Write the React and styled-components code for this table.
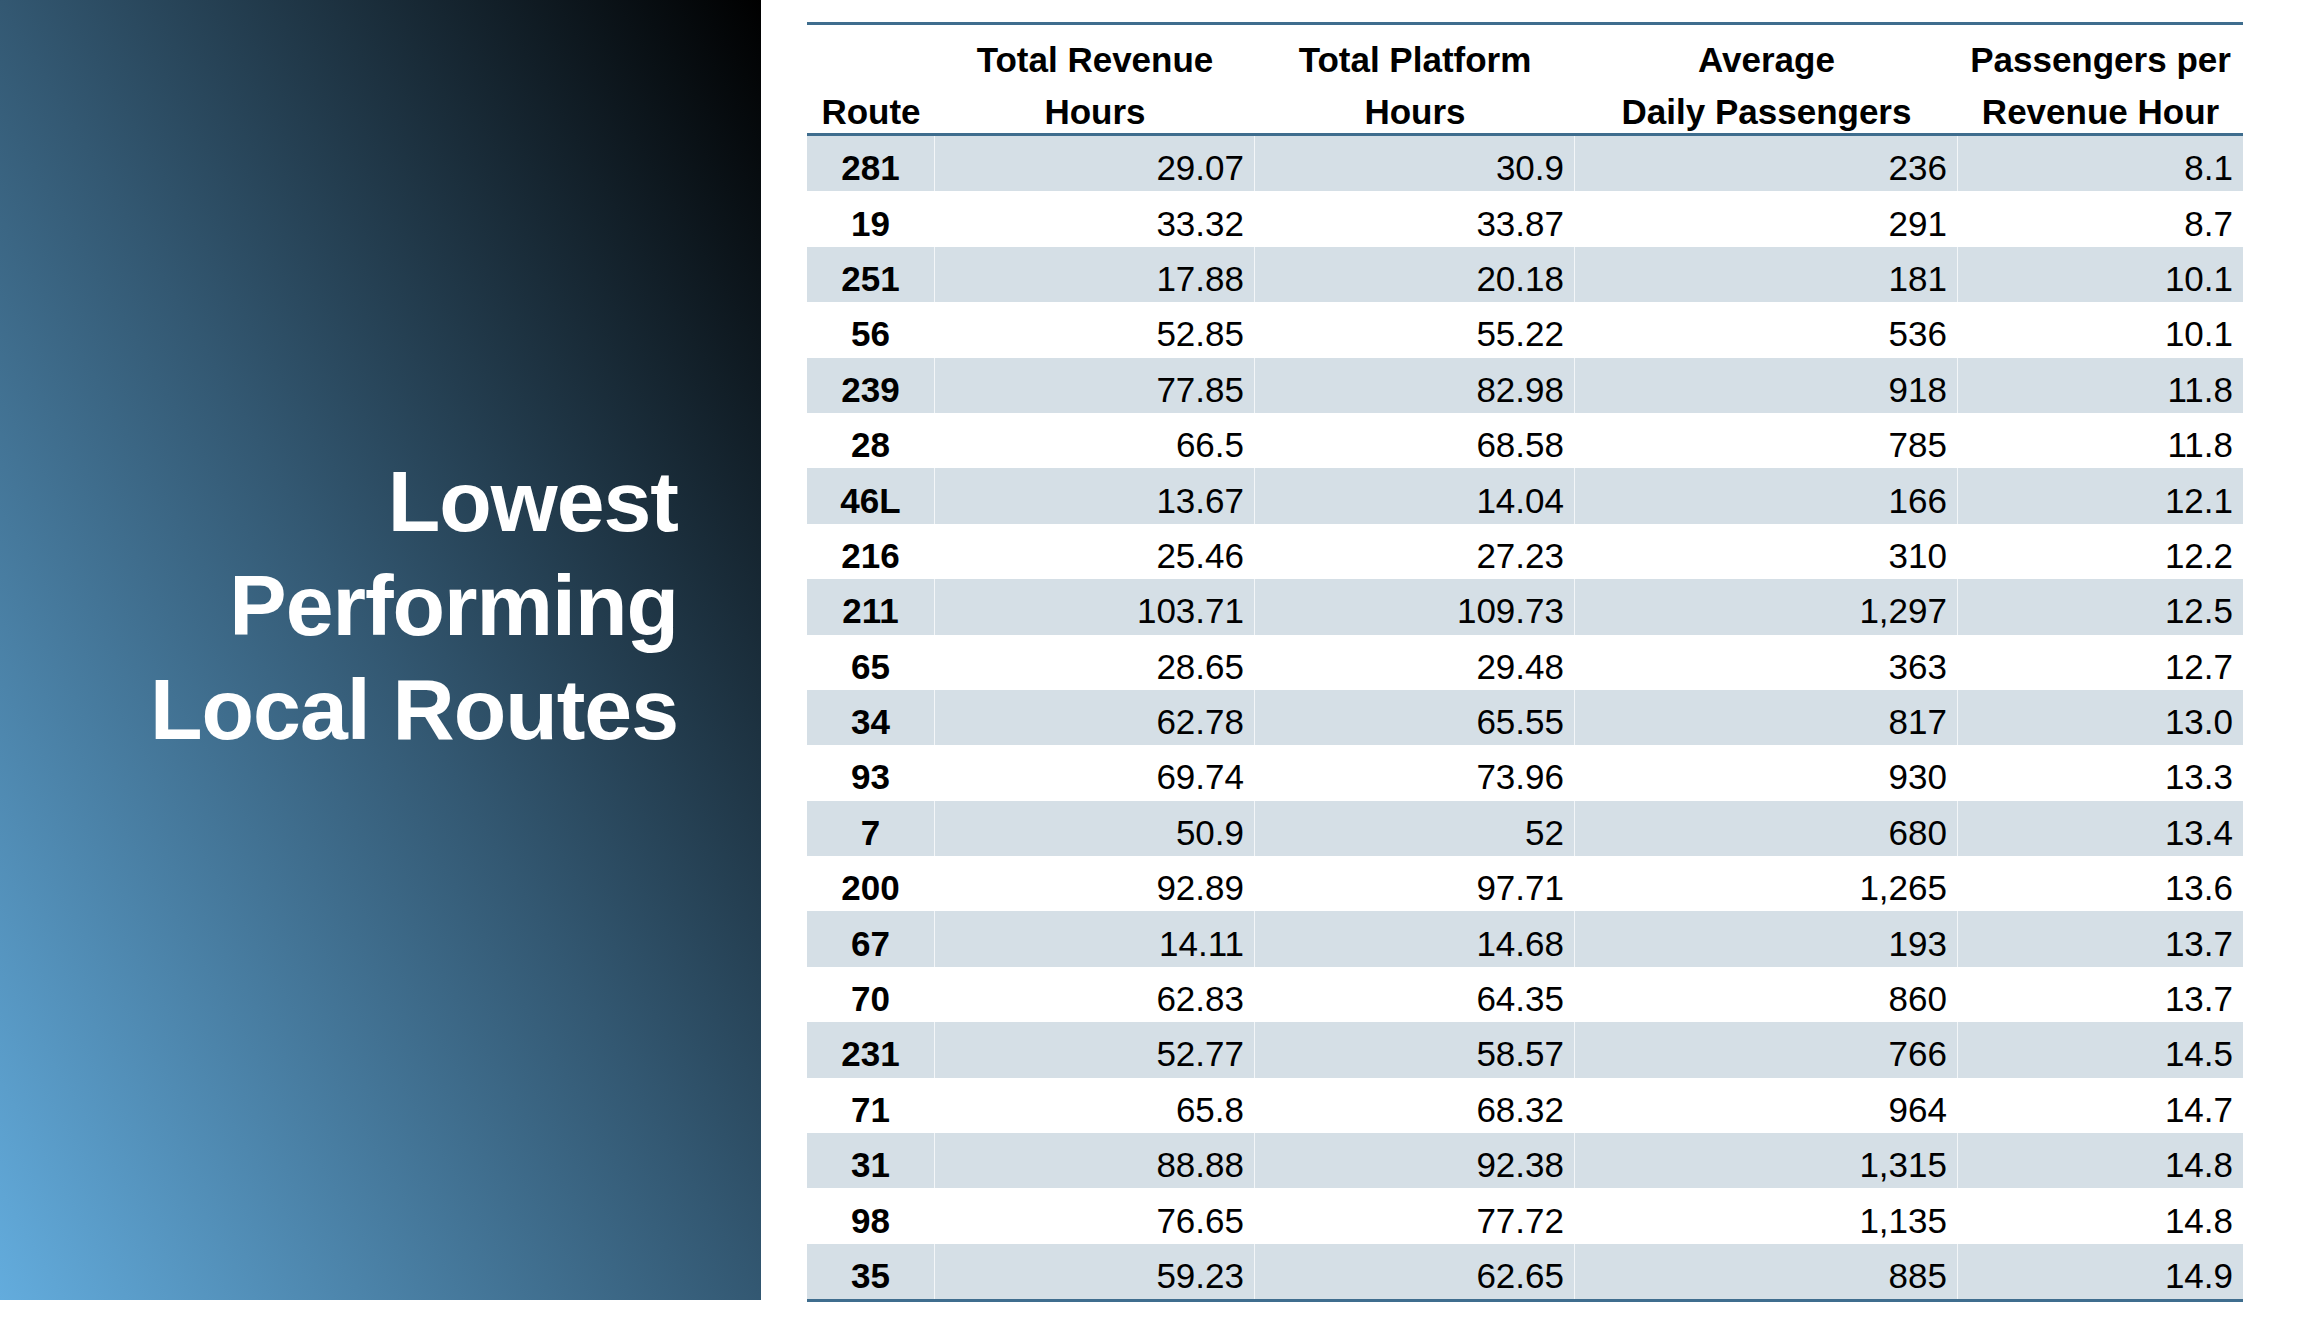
import React from "react";
import styled, { createGlobalStyle } from "styled-components";

const GlobalStyle = createGlobalStyle`
  html, body { margin: 0; padding: 0; background: #ffffff; }
  body { font-family: "Liberation Sans", Arial, sans-serif; }
`;

const Page = styled.div`
  display: flex;
  align-items: flex-start;
  width: 2302px;
  height: 1328px;
  background: #ffffff;
  overflow: hidden;
`;

const Panel = styled.div`
  flex: 0 0 761px;
  height: 1300px;
  box-sizing: border-box;
  background: linear-gradient(to top right, #63acdd 0%, #335872 50%, #000000 100%);
  display: flex;
  flex-direction: column;
  justify-content: center;
  align-items: flex-end;
  padding: 0 83px 90px 0;
`;

const Title = styled.h1`
  margin: 0;
  color: #ffffff;
  font-family: "Liberation Sans", Arial, sans-serif;
  font-weight: 700;
  font-size: 86px;
  line-height: 104px;
  letter-spacing: -1px;
  text-align: right;
`;

const TitleLine = styled.span`
  display: block;
`;

const TableWrap = styled.div`
  margin: 22px 0 0 46px;
  width: 1436px;
  border-top: 3px solid #3f6d8e;
  border-bottom: 3px solid #3f6d8e;
`;

const COLS = "128px 320px 320px 383px 285px";

const HeaderRow = styled.div`
  display: grid;
  grid-template-columns: ${COLS};
  height: 108px;
  border-bottom: 3px solid #3f6d8e;
`;

const HeaderCell = styled.div`
  display: flex;
  flex-direction: column;
  padding-top: 9px;
  text-align: center;
  font-weight: 700;
  font-size: 35px;
  color: #000000;
  white-space: nowrap;
`;

const HeadLine = styled.span`
  display: block;
  height: 52px;
  line-height: 52px;
`;

const Row = styled.div`
  display: grid;
  grid-template-columns: ${COLS};
  height: 55.4px;
  background: ${(p) => (p.$shaded ? "#d5dfe6" : "#ffffff")};
`;

const Cell = styled.div`
  display: flex;
  align-items: center;
  justify-content: ${(p) => (p.$route ? "center" : "flex-end")};
  padding: 9px 10px 0 10px;
  font-size: 35px;
  font-weight: ${(p) => (p.$route ? 700 : 400)};
  color: #000000;
  border-right: 1px solid rgba(255, 255, 255, 0.7);
  &:last-child { border-right: none; }
`;

const headers = [
  ["", "Route"],
  ["Total Revenue", "Hours"],
  ["Total Platform", "Hours"],
  ["Average", "Daily Passengers"],
  ["Passengers per", "Revenue Hour"],
];

const rows = [
  ["281", "29.07", "30.9", "236", "8.1"],
  ["19", "33.32", "33.87", "291", "8.7"],
  ["251", "17.88", "20.18", "181", "10.1"],
  ["56", "52.85", "55.22", "536", "10.1"],
  ["239", "77.85", "82.98", "918", "11.8"],
  ["28", "66.5", "68.58", "785", "11.8"],
  ["46L", "13.67", "14.04", "166", "12.1"],
  ["216", "25.46", "27.23", "310", "12.2"],
  ["211", "103.71", "109.73", "1,297", "12.5"],
  ["65", "28.65", "29.48", "363", "12.7"],
  ["34", "62.78", "65.55", "817", "13.0"],
  ["93", "69.74", "73.96", "930", "13.3"],
  ["7", "50.9", "52", "680", "13.4"],
  ["200", "92.89", "97.71", "1,265", "13.6"],
  ["67", "14.11", "14.68", "193", "13.7"],
  ["70", "62.83", "64.35", "860", "13.7"],
  ["231", "52.77", "58.57", "766", "14.5"],
  ["71", "65.8", "68.32", "964", "14.7"],
  ["31", "88.88", "92.38", "1,315", "14.8"],
  ["98", "76.65", "77.72", "1,135", "14.8"],
  ["35", "59.23", "62.65", "885", "14.9"],
];

export default function App() {
  return (
    <>
      <GlobalStyle />
      <Page>
        <Panel>
          <Title>
            <TitleLine>Lowest</TitleLine>
            <TitleLine>Performing</TitleLine>
            <TitleLine>Local Routes</TitleLine>
          </Title>
        </Panel>
        <TableWrap>
          <HeaderRow>
            {headers.map((h, i) => (
              <HeaderCell key={i}>
                <HeadLine>{h[0] || "\u00a0"}</HeadLine>
                <HeadLine>{h[1]}</HeadLine>
              </HeaderCell>
            ))}
          </HeaderRow>
          {rows.map((r, i) => (
            <Row key={i} $shaded={i % 2 === 0}>
              {r.map((v, j) => (
                <Cell key={j} $route={j === 0}>
                  {v}
                </Cell>
              ))}
            </Row>
          ))}
        </TableWrap>
      </Page>
    </>
  );
}
